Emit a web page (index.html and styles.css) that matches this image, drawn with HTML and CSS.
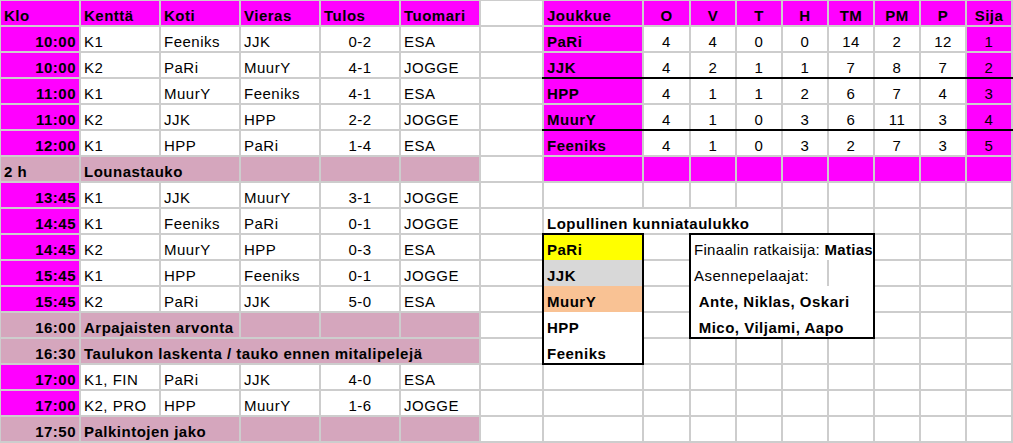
FILE: index.html
```html
<!DOCTYPE html>
<html lang="fi">
<head>
<meta charset="utf-8">
<title>Turnaus</title>
<link rel="stylesheet" href="styles.css">
</head>
<body>
<div class="sheet">
  <!-- boxes placed explicitly -->
  <div class="box box-teams">
    <div class="brow first b yellow">PaRi</div>
    <div class="brow b grey">JJK</div>
    <div class="brow b orange">MuurY</div>
    <div class="brow b">HPP</div>
    <div class="brow last b">Feeniks</div>
  </div>
  <div class="box box-awards">
    <div class="brow first tight">Finaalin ratkaisija: <b>Matias</b></div>
    <div class="brow split"><span class="part">Asennepelaajat:</span><span class="part"></span></div>
    <div class="brow b">&nbsp;Ante, Niklas, Oskari</div>
    <div class="brow last b">&nbsp;Mico, Viljami, Aapo</div>
  </div>

  <!-- row 0 -->
  <div class="c mag b">Klo</div><div class="c mag b">Kenttä</div><div class="c mag b">Koti</div><div class="c mag b">Vieras</div><div class="c mag b">Tulos</div><div class="c mag b">Tuomari</div>
  <div class="c"></div>
  <div class="c mag b">Joukkue</div><div class="c mag b ctr">O</div><div class="c mag b ctr">V</div><div class="c mag b ctr">T</div><div class="c mag b ctr">H</div><div class="c mag b ctr">TM</div><div class="c mag b ctr">PM</div><div class="c mag b ctr">P</div><div class="c mag b ctr">Sija</div>

  <!-- row 1 -->
  <div class="c mag b r">10:00</div><div class="c">K1</div><div class="c">Feeniks</div><div class="c">JJK</div><div class="c ctr">0-2</div><div class="c">ESA</div>
  <div class="c"></div>
  <div class="c mag b">PaRi</div><div class="c ctr">4</div><div class="c ctr">4</div><div class="c ctr">0</div><div class="c ctr">0</div><div class="c ctr">14</div><div class="c ctr">2</div><div class="c ctr">12</div><div class="c mag ctr">1</div>

  <!-- row 2 -->
  <div class="c mag b r">10:00</div><div class="c">K2</div><div class="c">PaRi</div><div class="c">MuurY</div><div class="c ctr">4-1</div><div class="c">JOGGE</div>
  <div class="c"></div>
  <div class="c mag b rule">JJK</div><div class="c ctr rule">4</div><div class="c ctr rule">2</div><div class="c ctr rule">1</div><div class="c ctr rule">1</div><div class="c ctr rule">7</div><div class="c ctr rule">8</div><div class="c ctr rule">7</div><div class="c mag ctr rule">2</div>

  <!-- row 3 -->
  <div class="c mag b r">11:00</div><div class="c">K1</div><div class="c">MuurY</div><div class="c">Feeniks</div><div class="c ctr">4-1</div><div class="c">ESA</div>
  <div class="c"></div>
  <div class="c mag b">HPP</div><div class="c ctr">4</div><div class="c ctr">1</div><div class="c ctr">1</div><div class="c ctr">2</div><div class="c ctr">6</div><div class="c ctr">7</div><div class="c ctr">4</div><div class="c mag ctr">3</div>

  <!-- row 4 -->
  <div class="c mag b r">11:00</div><div class="c">K2</div><div class="c">JJK</div><div class="c">HPP</div><div class="c ctr">2-2</div><div class="c">JOGGE</div>
  <div class="c"></div>
  <div class="c mag b rule">MuurY</div><div class="c ctr rule">4</div><div class="c ctr rule">1</div><div class="c ctr rule">0</div><div class="c ctr rule">3</div><div class="c ctr rule">6</div><div class="c ctr rule">11</div><div class="c ctr rule">3</div><div class="c mag ctr rule">4</div>

  <!-- row 5 -->
  <div class="c mag b r">12:00</div><div class="c">K1</div><div class="c">HPP</div><div class="c">PaRi</div><div class="c ctr">1-4</div><div class="c">ESA</div>
  <div class="c"></div>
  <div class="c mag b">Feeniks</div><div class="c ctr">4</div><div class="c ctr">1</div><div class="c ctr">0</div><div class="c ctr">3</div><div class="c ctr">2</div><div class="c ctr">7</div><div class="c ctr">3</div><div class="c mag ctr">5</div>

  <!-- row 6 -->
  <div class="c mauve b">2 h</div><div class="c mauve b s2">Lounastauko</div><div class="c mauve"></div><div class="c mauve"></div><div class="c mauve"></div>
  <div class="c"></div>
  <div class="c mag"></div><div class="c mag"></div><div class="c mag"></div><div class="c mag"></div><div class="c mag"></div><div class="c mag"></div><div class="c mag"></div><div class="c mag"></div><div class="c mag"></div>

  <!-- row 7 -->
  <div class="c mag b r">13:45</div><div class="c">K1</div><div class="c">JJK</div><div class="c">MuurY</div><div class="c ctr">3-1</div><div class="c">JOGGE</div>
  <div class="c"></div>
  <div class="c"></div><div class="c"></div><div class="c"></div><div class="c"></div><div class="c"></div><div class="c"></div><div class="c"></div><div class="c"></div><div class="c"></div>

  <!-- row 8 -->
  <div class="c mag b r">14:45</div><div class="c">K1</div><div class="c">Feeniks</div><div class="c">PaRi</div><div class="c ctr">0-1</div><div class="c">JOGGE</div>
  <div class="c"></div>
  <div class="c b s4">Lopullinen kunniataulukko</div><div class="c"></div><div class="c"></div><div class="c"></div><div class="c"></div><div class="c"></div>

  <!-- row 9 -->
  <div class="c mag b r">14:45</div><div class="c">K2</div><div class="c">MuurY</div><div class="c">HPP</div><div class="c ctr">0-3</div><div class="c">ESA</div>
  <div class="c"></div>
  <div class="c"></div>
  <div class="c"></div><div class="c"></div><div class="c"></div>

  <!-- row 10 -->
  <div class="c mag b r">15:45</div><div class="c">K1</div><div class="c">HPP</div><div class="c">Feeniks</div><div class="c ctr">0-1</div><div class="c">JOGGE</div>
  <div class="c"></div>
  <div class="c"></div>
  <div class="c"></div><div class="c"></div><div class="c"></div>

  <!-- row 11 -->
  <div class="c mag b r">15:45</div><div class="c">K2</div><div class="c">PaRi</div><div class="c">JJK</div><div class="c ctr">5-0</div><div class="c">ESA</div>
  <div class="c"></div>
  <div class="c"></div>
  <div class="c"></div><div class="c"></div><div class="c"></div>

  <!-- row 12 -->
  <div class="c mauve b r">16:00</div><div class="c mauve b s2">Arpajaisten arvonta</div><div class="c mauve"></div><div class="c mauve"></div><div class="c mauve"></div>
  <div class="c"></div>
  <div class="c"></div>
  <div class="c"></div><div class="c"></div><div class="c"></div>

  <!-- row 13 -->
  <div class="c mauve b r">16:30</div><div class="c mauve b s5">Taulukon laskenta / tauko ennen mitalipelejä</div>
  <div class="c"></div>
  <div class="c"></div><div class="c"></div><div class="c"></div><div class="c"></div><div class="c"></div><div class="c"></div><div class="c"></div><div class="c"></div>

  <!-- row 14 -->
  <div class="c mag b r">17:00</div><div class="c">K1, FIN</div><div class="c">PaRi</div><div class="c">JJK</div><div class="c ctr">4-0</div><div class="c">ESA</div>
  <div class="c"></div>
  <div class="c"></div><div class="c"></div><div class="c"></div><div class="c"></div><div class="c"></div><div class="c"></div><div class="c"></div><div class="c"></div><div class="c"></div>

  <!-- row 15 -->
  <div class="c mag b r">17:00</div><div class="c">K2, PRO</div><div class="c">HPP</div><div class="c">MuurY</div><div class="c ctr">1-6</div><div class="c">JOGGE</div>
  <div class="c"></div>
  <div class="c"></div><div class="c"></div><div class="c"></div><div class="c"></div><div class="c"></div><div class="c"></div><div class="c"></div><div class="c"></div><div class="c"></div>

  <!-- row 16 -->
  <div class="c mauve b r">17:50</div><div class="c mauve b s2">Palkintojen jako</div><div class="c mauve"></div><div class="c mauve"></div><div class="c mauve"></div>
  <div class="c"></div>
  <div class="c"></div><div class="c"></div><div class="c"></div><div class="c"></div><div class="c"></div><div class="c"></div><div class="c"></div><div class="c"></div><div class="c"></div>
</div>
</body>
</html>
```
FILE: styles.css
```css
html, body {
  margin: 0;
  padding: 0;
  background: #ffffff;
}

body {
  font-family: "Liberation Sans", Arial, sans-serif;
  font-size: 15px;
  letter-spacing: 0.5px;
  color: #000000;
}

.sheet {
  display: grid;
  grid-template-columns: repeat(6, 78px) 61px 98px 45px repeat(7, 44px);
  grid-template-rows: repeat(17, 24px);
  gap: 2px;
  padding: 1px 2px 2px 1px;
  background: #cdcdcd;
  width: max-content;
}

.c {
  background: #ffffff;
  display: flex;
  align-items: flex-end;
  padding: 0 3px 1px 3px;
  line-height: 17px;
  white-space: nowrap;
  position: relative;
  min-width: 0;
}

.b { font-weight: bold; }
.r { justify-content: flex-end; }
.ctr { justify-content: center; }

.mag { background: #ff00ff; }
.mauve { background: #d5a6bd; }

.s2 { grid-column: span 2; }
.s4 { grid-column: span 4; }
.s5 { grid-column: span 5; }

.rule::after {
  content: "";
  position: absolute;
  left: -2px;
  right: -2px;
  bottom: -2px;
  height: 2px;
  background: #000000;
}

.box {
  outline: 2px solid #000000;
  background: #ffffff;
  display: flex;
  flex-direction: column;
  z-index: 1;
}

.box-teams {
  grid-column: 8;
  grid-row: 10 / span 5;
}

.box-awards {
  grid-column: 10 / span 4;
  grid-row: 10 / span 4;
}

.brow {
  height: 26px;
  display: flex;
  align-items: flex-end;
  padding: 0 3px 2px 3px;
  line-height: 17px;
  white-space: nowrap;
  box-sizing: border-box;
}

.brow.first { height: 25px; }
.brow.last { height: 25px; padding-bottom: 1px; }
.brow.tight { letter-spacing: 0.3px; white-space: pre; }

.yellow { background: #ffff00; }
.grey { background: #d8d8d8; }
.orange { background: #f9c294; }

.brow.split {
  padding: 0;
  display: grid;
  grid-template-columns: 1fr 44px;
  column-gap: 2px;
  align-items: stretch;
  background: #cdcdcd;
}

.split .part {
  background: #ffffff;
  display: flex;
  align-items: flex-end;
  padding: 0 3px 2px 3px;
}
```
